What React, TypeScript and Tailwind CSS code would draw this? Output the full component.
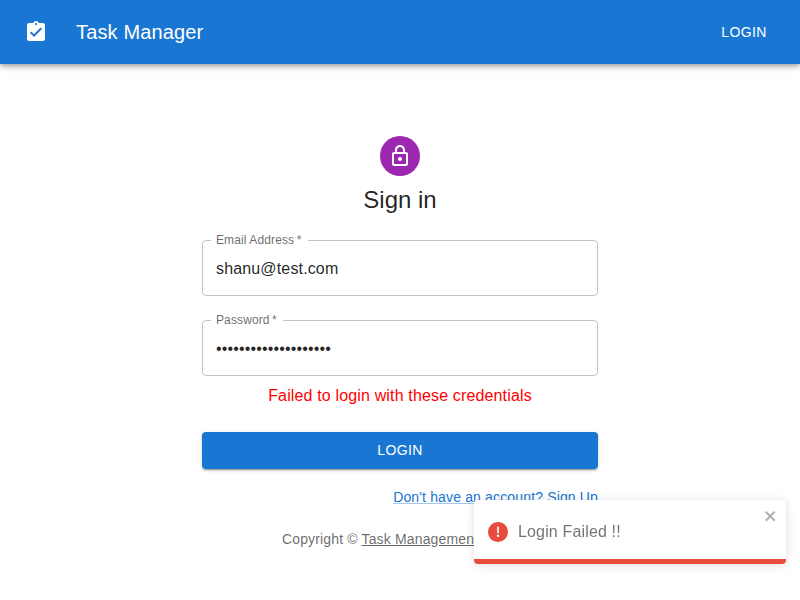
import React from 'react';

function ClipboardIcon() {
  return (
    <svg className="h-6 w-6 fill-current" viewBox="0 0 24 24" aria-hidden="true">
      <path d="M19 3h-4.18C14.4 1.84 13.3 1 12 1c-1.3 0-2.4.84-2.82 2H5c-1.1 0-2 .9-2 2v14c0 1.1.9 2 2 2h14c1.1 0 2-.9 2-2V5c0-1.1-.9-2-2-2zm-7 0c.55 0 1 .45 1 1s-.45 1-1 1-1-.45-1-1 .45-1 1-1zm-2 14l-4-4 1.41-1.41L10 14.17l6.59-6.59L18 9l-8 8z" />
    </svg>
  );
}

function LockIcon() {
  return (
    <svg className="h-6 w-6 fill-current" viewBox="0 0 24 24" aria-hidden="true">
      <path d="M18 8h-1V6c0-2.76-2.24-5-5-5S7 3.24 7 6v2H6c-1.1 0-2 .9-2 2v10c0 1.1.9 2 2 2h12c1.1 0 2-.9 2-2V10c0-1.1-.9-2-2-2zM9 6c0-1.66 1.34-3 3-3s3 1.34 3 3v2H9V6zm9 14H6V10h12v10zm-6-3c1.1 0 2-.9 2-2s-.9-2-2-2-2 .9-2 2 .9 2 2 2z" />
    </svg>
  );
}

interface FieldProps {
  id: string;
  label: string;
  type: string;
  value: string;
}

function Field({ id, label, type, value }: FieldProps) {
  return (
    <div className="relative flex h-14 w-full">
      <label
        htmlFor={id}
        className="absolute top-0 left-0 origin-top-left translate-x-[14px] -translate-y-[9px] scale-75 text-base leading-[23px] tracking-[0.00938em] whitespace-nowrap text-black/60"
      >
        {label}&thinsp;*
      </label>
      <input
        id={id}
        type={type}
        defaultValue={value}
        className="h-14 w-full bg-transparent px-[14px] pt-[17px] pb-4 text-base leading-[23px] tracking-[0.00938em] text-black/87 outline-none"
      />
      {/* The legend opens the gap in the outline behind the floating label. */}
      <fieldset
        aria-hidden="true"
        className="pointer-events-none absolute -top-[5px] right-0 bottom-0 left-0 min-w-0 rounded border border-black/23 px-2"
      >
        <legend className="h-[11px] text-xs leading-[11px] whitespace-nowrap">
          <span className="inline-block px-[5px] tracking-[0.15px] opacity-0">{label}&nbsp;*</span>
        </legend>
      </fieldset>
    </div>
  );
}

function Toast() {
  return (
    <div
      role="alert"
      className="fixed right-[14px] bottom-9 flex h-16 w-[312px] flex-col overflow-hidden rounded bg-white tracking-normal text-[#757575] shadow-[0_1px_10px_0_rgba(0,0,0,0.1),0_2px_15px_0_rgba(0,0,0,0.05)]"
    >
      <div className="flex flex-1 p-2 pb-0">
        <div className="flex h-12 flex-1 items-center p-1.5">
          <svg className="mr-2.5 h-5 w-5 fill-[#e74c3c]" viewBox="0 0 24 24" aria-hidden="true">
            <path d="M11.983 0a12.206 12.206 0 00-8.51 3.653A11.8 11.8 0 000 12.207 11.779 11.779 0 0011.8 24h.214A12.111 12.111 0 0024 11.791 11.766 11.766 0 0011.983 0zM10.5 16.542a1.476 1.476 0 011.449-1.53h.027a1.527 1.527 0 011.523 1.47 1.475 1.475 0 01-1.449 1.53h-.027a1.529 1.529 0 01-1.523-1.47zM11 12.5v-6a1 1 0 012 0v6a1 1 0 11-2 0z" />
          </svg>
          <span className="tracking-[0.00938em]">Login Failed !!</span>
        </div>
        <button aria-label="close" className="h-4 w-[14px] self-start opacity-30">
          <svg className="h-4 w-[14px] fill-black" viewBox="0 0 14 16">
            <path
              fillRule="evenodd"
              d="M7.71 8.23l3.75 3.75-1.48 1.48-3.75-3.75-3.75 3.75L1 11.98l3.75-3.75L1 4.48 2.48 3l3.75 3.75L9.98 3l1.48 1.48-3.75 3.75z"
            />
          </svg>
        </button>
      </div>
      <div className="h-[5px] shrink-0 bg-[#e74c3c]" />
    </div>
  );
}

export default function App() {
  return (
    <div className="min-h-screen overflow-hidden bg-white font-['Liberation_Sans',Arial,sans-serif] text-base tracking-[0.00938em] text-black/87">
      <header className="flex h-16 items-center bg-[#1976d2] px-6 text-white shadow-[0_2px_4px_-1px_rgba(0,0,0,0.2),0_4px_5px_0_rgba(0,0,0,0.14),0_1px_10px_0_rgba(0,0,0,0.12)]">
        <ClipboardIcon />
        <h1 className="ml-7 flex-1 text-xl leading-8 tracking-[0.0075em]">Task Manager</h1>
        <button className="min-w-16 px-2 py-1.5 text-sm leading-[24.5px] tracking-[0.02857em]">LOGIN</button>
      </header>

      <main className="mx-auto flex w-[396px] flex-col items-center pt-[72px]">
        <div className="flex h-10 w-10 items-center justify-center rounded-full bg-[#9c27b0] text-white">
          <LockIcon />
        </div>
        <h2 className="mt-2 text-2xl leading-8 tracking-normal">Sign in</h2>
        <form className="mt-6 flex w-full flex-col">
          <div className="flex flex-col gap-6">
            <Field id="email" label="Email Address" type="text" value="shanu@test.com" />
            <Field id="password" label="Password" type="password" value="12345678901234567890" />
          </div>
          <p className="mt-2 text-center leading-6 text-[#ff0000]">Failed to login with these credentials</p>
          <button
            type="button"
            className="mt-6 mb-4 h-[36.5px] rounded bg-[#1976d2] text-sm leading-[24.5px] tracking-[0.02857em] text-white shadow-[0_3px_1px_-2px_rgba(0,0,0,0.2),0_2px_2px_0_rgba(0,0,0,0.14),0_1px_5px_0_rgba(0,0,0,0.12)]"
          >
            LOGIN
          </button>
          <div className="h-6 text-right leading-6">
            <a
              href="#"
              className="text-sm leading-5 tracking-[0.01071em] text-[#1976d2] underline decoration-[#1976d2]/40"
            >
              Don't have an account? Sign Up
            </a>
          </div>
        </form>
        <p className="mt-5 text-center text-sm leading-5 tracking-[0.01071em] text-black/60">
          Copyright ©{' '}
          <a href="#" className="underline">
            Task Management
          </a>{' '}
          2023.
        </p>
      </main>

      <Toast />
    </div>
  );
}
